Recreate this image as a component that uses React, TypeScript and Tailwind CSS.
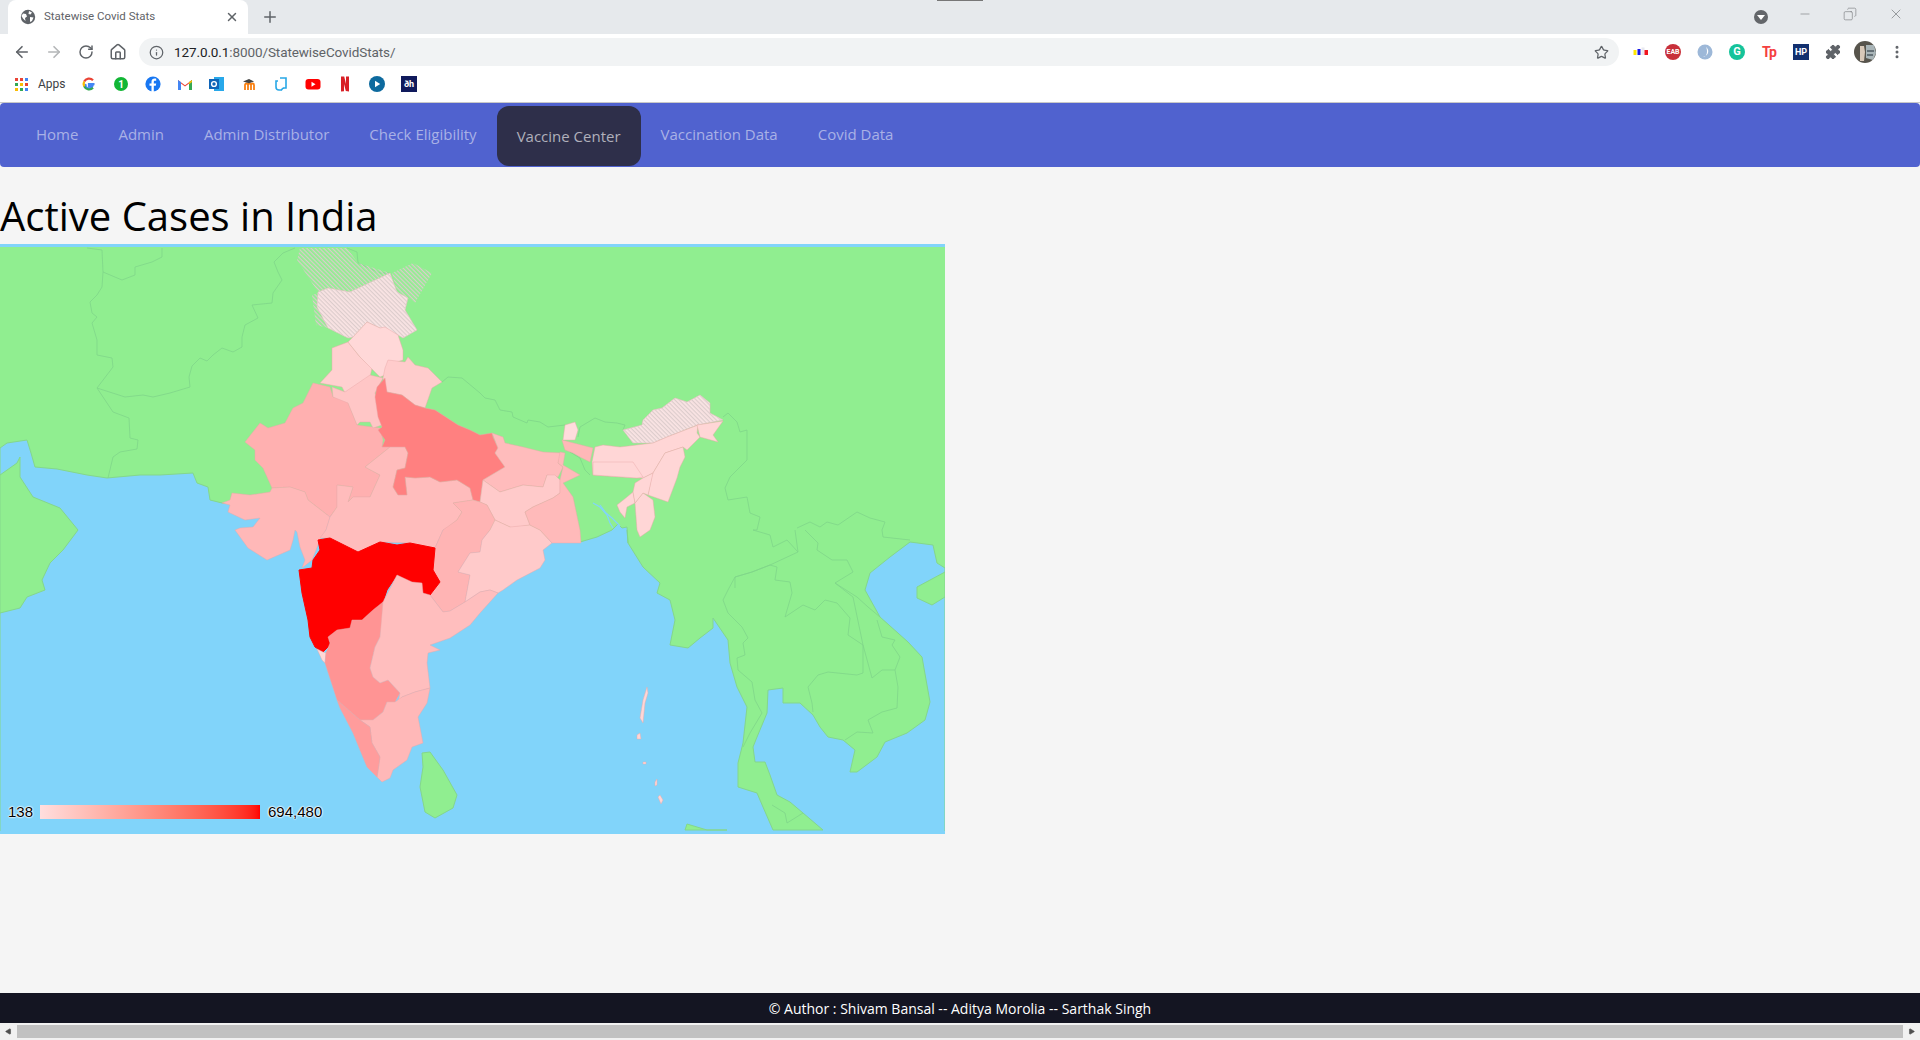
import { ArrowLeft, ArrowRight, RotateCw, Home, Info, Star, X, Plus, Minus, Copy, Puzzle, EllipsisVertical, Play } from 'lucide-react';

const navLinks = ['Home', 'Admin', 'Admin Distributor', 'Check Eligibility', 'Vaccine Center', 'Vaccination Data', 'Covid Data'];

const SEA =
    '0,448 7,443 27,440 31,453 35,467 57,469 87,475 107,478 140,475 160,475 193,473 197,483 208,487 210,500 222,503 580,542 597,537 612,530 618,524 622,528 627,527 628,543 643,567 660,583 657,593 670,600 675,620 670,645 688,648 700,638 713,628 713,618 728,640 730,663 737,687 747,707 743,743 738,763 738,787 757,793 763,807 773,830 823,830 803,813 790,802 777,795 770,775 765,762 755,762 753,747 757,737 767,713 768,690 783,688 783,703 800,703 813,715 820,727 828,737 843,740 855,750 850,772 857,772 877,757 885,742 907,733 925,720 930,702 922,657 908,642 880,617 865,590 870,573 890,557 910,542 933,545 937,563 945,568 945,834 0,834';

const LAND = [
    '0,475 17,463 20,457 20,477 33,497 60,508 78,530 63,550 50,563 42,580 45,590 27,597 20,608 0,613',
    '917,587 945,572 945,597 932,605 917,598',
    '422,753 430,752 443,770 457,795 453,808 435,818 425,812 420,787 423,767',
    '685,830 687,824 697,827 707,830 727,830',
];

const BORDERS = [
    '87,248 102,250 103,272 102,287 97,295 90,302 92,313 97,317 92,323 97,340 97,355 112,358 113,367 97,388 107,403 113,412 129,418 130,438 138,440 137,449 120,452 113,457 108,478',
    '103,272 122,280 135,275 135,267 152,262 162,257 162,248',
    '97,388 125,397 143,395 153,397 170,393 190,387 189,377 192,366 200,358 207,361 213,355 222,348 233,352 242,347 242,337 245,325 258,318 252,305 272,303 273,293 282,280 278,272 274,262 283,253 295,248',
    '347,248 357,252 358,263 380,273 390,273',
    '442,382 448,377 462,378 480,393 485,398 495,400 500,410 512,412 513,417 527,423 528,420 540,422 548,427 565,425',
    '578,437 580,427 595,418 605,422 617,423 625,425 623,430',
    '723,417 728,413 737,422 740,432 747,430 747,460 730,477 725,488 728,500 747,497 750,513 760,517 757,530 753,530 770,535 773,547 787,540 798,552 770,565 752,572 735,577 735,588',
    '797,528 810,522 820,527 827,522 838,525 857,512 870,518 885,522 882,530',
    '795,530 798,552',
    '805,530 818,543 817,550 832,560 847,560 853,572 835,583 857,597 868,607 880,617',
    '882,530 883,537 910,540',
    '770,565 777,567 775,580 790,582 792,593 785,617 803,605 815,610 825,600 837,603 850,618 848,635 863,645 863,673 857,675 828,672 818,675 808,687 812,703 813,712',
    '770,565 752,572 735,577 728,590 723,600 728,613 742,627 748,638 743,643 745,655 737,658 738,670 752,682 755,700 762,713 750,733 743,747',
    '835,583 853,597 863,645 872,678 882,670 895,670 900,657 892,645 895,640 882,637 877,620',
    '895,670 898,687 897,708 882,712 868,720 873,733 857,732 845,740',
    '772,805 785,813 787,823 803,813',
    '627,530 628,543',
    '570,452 580,458 585,470 590,475',
];

const RIVERS = ['593,503 600,507 607,515 610,523 613,528', '600,505 606,513 612,518 620,526'];

const STATES = [
    { fill: '#ffb0b0', p: '245,442 260,423 268,428 285,423 293,408 303,403 313,383 330,387 333,397 347,400 357,425 380,428 383,440 382,447 390,447 365,467 380,475 370,497 353,497 348,502 353,487 337,485 337,507 330,517 308,500 305,492 290,487 272,488 263,468 255,460 255,450' },
    { fill: '#ffd0d0', p: '320,383 332,370 332,348 348,342 360,357 372,368 370,377 360,387 345,393 342,387' },
    { fill: '#ffc6c6', p: '332,387 345,392 370,375 383,378 375,393 382,425 373,428 370,422 360,422 357,425 348,403 333,397' },
    { fill: '#ffd8d8', p: '353,337 367,322 380,328 385,327 398,335 403,350 403,360 387,365 385,375 380,377 370,367 360,357 348,342' },
    { fill: '#ffcccc', p: '385,368 388,360 405,362 408,357 415,365 428,368 442,382 432,388 425,408 415,405 402,395 387,392 383,378' },
    { fill: '#ffb8b8', p: '222,503 230,500 232,493 250,495 270,492 272,488 290,487 305,492 308,500 330,517 326,530 320,540 312,560 302,568 305,560 300,547 297,532 295,530 293,540 290,550 267,560 248,548 235,530 240,528 253,527 260,518 245,520 228,512 230,505' },
    { fill: '#ffbcbc', p: '365,467 390,447 405,447 408,453 405,468 397,470 393,487 398,495 407,495 405,477 415,478 430,477 440,482 457,480 470,488 473,500 453,503 462,512 457,520 447,528 443,530 435,548 410,543 380,542 358,552 330,538 320,538 326,530 330,517 337,507 337,485 353,487 348,502 353,497 370,497 380,475' },
    { fill: '#ff8080', p: '385,378 377,387 375,397 378,417 382,427 378,430 385,440 382,447 390,447 405,447 408,453 405,468 397,470 393,487 398,495 407,495 405,477 415,478 430,477 440,482 457,480 470,488 473,500 480,502 483,480 505,467 495,453 498,448 493,437 492,433 480,435 470,430 458,425 435,410 425,408 415,405 402,395 387,392' },
    { fill: '#ffbcbc', p: '492,433 503,437 505,443 523,447 543,452 562,453 558,463 563,467 558,477 547,475 543,487 523,485 500,492 483,480 505,467 495,453 498,448' },
    { fill: '#ffcaca', p: '483,480 500,492 523,485 543,487 547,475 555,475 560,480 560,493 553,498 533,507 525,512 530,525 512,528 495,520 487,505 480,502' },
    { fill: '#ffb4b4', p: '453,503 473,500 480,502 487,505 495,520 490,530 482,540 480,552 470,553 458,572 470,575 465,602 450,611 443,612 430,595 440,582 433,570 435,548 443,530 457,520 462,512' },
    { fill: '#ffcaca', p: '495,520 510,527 530,525 540,530 552,543 543,550 545,560 540,568 517,580 503,590 498,593 490,590 480,592 468,600 465,602 470,575 458,572 470,553 480,552 482,540 490,530' },
    { fill: '#ffbaba', p: '560,452 565,453 563,465 580,475 563,483 573,497 580,530 581,543 563,543 552,543 540,530 530,525 525,512 533,507 553,498 560,493 560,480 563,467 558,463' },
    { fill: '#ffb8b8', p: '562,440 593,448 590,462 580,457 573,453 565,450' },
    { fill: '#ffdcdc', p: '563,440 565,425 575,422 578,430 575,440' },
    { fill: '#ffd6d6', p: '595,447 603,445 620,447 653,443 667,437 698,425 697,433 700,437 687,450 683,447 665,453 653,473 643,478 637,478 593,475 592,462' },
    { fill: '#ffd6d6', p: '697,425 723,421 713,435 718,442 700,437' },
    { fill: '#ffd6d6', p: '593,462 633,462 643,477 637,478 593,475' },
    { fill: '#ffd6d6', p: '653,473 665,453 683,447 685,457 680,467 677,478 668,502 648,495 652,475' },
    { fill: '#ffd6d6', p: '617,505 627,497 633,492 635,503 627,507 625,518 620,512' },
    { fill: '#ffd6d6', p: '635,503 643,493 653,500 655,517 650,530 650,530 640,537 637,530' },
    { fill: '#ffd6d6', p: '635,483 643,478 653,473 648,495 643,493 635,503 633,492' },
    { fill: '#ff0000', p: '318,540 330,538 358,552 380,542 397,545 410,543 435,548 433,570 440,582 430,595 423,593 422,583 412,582 397,575 387,590 383,602 373,610 362,620 352,620 350,628 337,630 328,637 330,645 323,652 315,647 310,637 308,620 302,593 299,570 312,568 313,560 320,550' },
    { fill: '#ffd8d8', p: '317,649 323,652 326,653 325,663 322,660' },
    { fill: '#ff9494', p: '326,653 330,643 328,637 337,630 350,628 352,620 362,620 373,610 383,602 383,617 380,637 375,647 370,668 373,677 380,683 388,680 400,693 395,702 387,702 383,712 373,720 360,720 337,700 325,663' },
    { fill: '#ffbebe', p: '383,602 397,575 412,582 422,583 423,593 430,595 443,612 450,611 465,602 468,600 480,592 490,590 498,593 480,613 470,625 450,638 430,645 440,650 428,653 427,663 430,688 415,692 402,697 398,703 400,693 388,680 380,683 373,677 370,668 375,647 380,637' },
    { fill: '#ffb8b8', p: '360,720 373,720 383,712 387,702 395,702 402,697 415,692 430,688 427,703 418,717 423,743 412,747 407,760 393,770 390,778 382,782 377,777 380,757 372,743 370,727' },
    { fill: '#ff9c9c', p: '337,700 360,720 370,727 372,743 380,757 377,777 367,767 353,733 340,708' },
    { fill: '#ffd6d6', p: '647,687 648,693 645,703 643,723 640,718 643,700' },
    { fill: '#ffd6d6', p: '637,735 640,733 641,739 637,739' },
    { fill: '#ffd6d6', p: '643,762 646,762 646,764 643,764' },
    { fill: '#ffd6d6', p: '655,782 657,779 657,785 655,786' },
    { fill: '#ffd6d6', p: '660,795 663,800 661,804 658,797' },
];

// disputed areas: hatch over the map, solid pink underneath only where it is inside India
const HATCHED_OPEN = [
    '297,260 300,248 347,248 358,263 390,273 350,292 328,288 318,292',
    '392,273 413,263 432,273 415,303 408,298 397,292',
    '312,295 318,293 328,328 316,325',
];
const HATCHED_SOLID = [
    '318,292 328,288 350,292 390,273 397,292 408,298 405,310 417,330 403,338 398,335 380,328 367,322 353,337 348,338 328,328 317,307',
    '623,430 642,425 643,420 653,410 662,408 675,398 687,402 700,395 710,403 710,413 723,420 697,425 667,437 653,443 633,443',
];

function IndiaMap() {
    return (
        <svg viewBox="0 244 945 590" className="block w-full h-full">
            <defs>
                <pattern id="hatch" width="3" height="3" patternUnits="userSpaceOnUse" patternTransform="rotate(45)">
                    <rect width="3" height="1.2" fill="#dccccc" />
                </pattern>
            </defs>
            <rect x="0" y="244" width="945" height="590" fill="#90ee90" />
            <polygon points={SEA} fill="#81d4fa" stroke="#84d78c" strokeWidth="1" />
            <rect x="0" y="244" width="945" height="3" fill="#81d4fa" />
            <rect x="0" y="831" width="945" height="3" fill="#81d4fa" />
            {LAND.map((p) => (
                <polygon key={p} points={p} fill="#90ee90" stroke="#84d78c" strokeWidth="1" />
            ))}
            {BORDERS.map((p) => (
                <polyline key={p} points={p} fill="none" stroke="#80d68a" strokeOpacity="0.8" strokeWidth="1" />
            ))}
            {RIVERS.map((p) => (
                <polyline key={p} points={p} fill="none" stroke="#81d4fa" strokeWidth="1.2" />
            ))}
            {HATCHED_OPEN.map((p) => (
                <polygon key={p} points={p} fill="url(#hatch)" />
            ))}
            {HATCHED_SOLID.map((p) => (
                <g key={p}>
                    <polygon points={p} fill="#fae4e4" stroke="#e3bcbc" strokeOpacity="0.6" strokeWidth="1" />
                    <polygon points={p} fill="url(#hatch)" />
                </g>
            ))}
            {STATES.map((s) => (
                <polygon key={s.p} points={s.p} fill={s.fill} stroke={s.fill === '#ff0000' ? '#ff0000' : '#e8a8a8'} strokeOpacity={s.fill === '#ff0000' ? 1 : 0.45} strokeWidth="1" />
            ))}
        </svg>
    );
}

function Favicon({ children }: { children: React.ReactNode }) {
    return <svg viewBox="0 0 16 16" className="w-4 h-4 shrink-0">{children}</svg>;
}

function Bookmarks() {
    return (
        <div className="h-[35px] pb-[1px] bg-white flex items-center pl-[15px] text-[12px] text-[#3c4043] font-['Roboto',sans-serif]">
            <div className="grid grid-cols-3 gap-[2px] w-[13px] h-[13px]">
                {['bg-[#ea4335]', 'bg-[#ea4335]', 'bg-[#4285f4]', 'bg-[#34a853]', 'bg-[#fbbc05]', 'bg-[#ea4335]', 'bg-[#fbbc05]', 'bg-[#34a853]', 'bg-[#4285f4]'].map((c, i) => (
                    <span key={i} className={`${c} w-[3px] h-[3px]`} />
                ))}
            </div>
            <span className="ml-[10px] w-[43px]">Apps</span>
            <div className="flex items-center gap-4">
                <Favicon>
                    <path d="M13.5 8.2H8v2.2h3.2A3.4 3.4 0 0 1 4.7 8" fill="none" stroke="#4285f4" strokeWidth="2.2" />
                    <path d="M12 4.3A5.4 5.4 0 0 0 3.2 5.6" fill="none" stroke="#ea4335" strokeWidth="2.2" />
                    <path d="M3.2 5.6a5.4 5.4 0 0 0 0 4.8" fill="none" stroke="#fbbc05" strokeWidth="2.2" />
                    <path d="M3.2 10.4a5.4 5.4 0 0 0 8.8 1.4" fill="none" stroke="#34a853" strokeWidth="2.2" />
                </Favicon>
                <Favicon>
                    <circle cx="8" cy="8" r="7" fill="#12b635" />
                    <text x="8" y="11.5" textAnchor="middle" fontSize="10" fontWeight="700" fill="#fff" fontFamily="Roboto">1</text>
                </Favicon>
                <Favicon>
                    <circle cx="8" cy="8" r="7.6" fill="#1877f2" />
                    <path d="M8.8 16V9.8h2l.4-2.4H8.8V6c0-.8.3-1.2 1.2-1.2h1.2V2.7c-2.6-.5-4.7.2-4.7 3v1.7h-2v2.4h2V16z" fill="#fff" />
                </Favicon>
                <Favicon>
                    <path d="M1 14V4l7 5.2L15 4v10h-3V7.5L8 10.6 4 7.5V14z" fill="#ea4335" />
                    <path d="M1 14V4l3 2.2V14z" fill="#4285f4" />
                    <path d="M15 14V4l-3 2.2V14z" fill="#34a853" />
                    <path d="M12 6.2 15 4v2l-3 2.2z" fill="#fbbc05" />
                </Favicon>
                <Favicon>
                    <rect x="5" y="1" width="10" height="14" fill="#28a8ea" />
                    <rect x="0" y="3" width="10" height="10" fill="#0f65b8" />
                    <circle cx="5" cy="8" r="2.4" fill="none" stroke="#fff" strokeWidth="1.4" />
                </Favicon>
                <Favicon>
                    <path d="M2 14V9c0-2 3-2 3 0v5M5 9c0-2 3-2 3 0v5M8 9c0-2 3-2 3 0v5" transform="translate(2 0)" fill="none" stroke="#f98012" strokeWidth="1.8" />
                    <path d="M2 5.5 8 3l5 2.5-5 1.8z" fill="#444" />
                </Favicon>
                <Favicon>
                    <path d="M7 2h6v10h-3M10 12l-2 2.5M5 5H3v6a3 3 0 0 0 3 3h2" fill="none" stroke="#29a8e6" strokeWidth="1.6" />
                </Favicon>
                <Favicon>
                    <rect x="0.5" y="3" width="15" height="10.5" rx="3" fill="#f00" />
                    <path d="M6.5 5.8v5l4-2.5z" fill="#fff" />
                </Favicon>
                <Favicon>
                    <path d="M4 0.5h3.2L9 8V0.5h3v15l-3.2-.5L7 8v7.2l-3 .4z" fill="#d81f26" />
                </Favicon>
                <Favicon>
                    <circle cx="8" cy="8" r="8" fill="#0d6a9e" />
                    <path d="M6 4.8v6.4L11.2 8z" fill="#fff" />
                </Favicon>
                <div className="w-4 h-4 bg-[#101a5c] text-white text-[9px] leading-4 text-center font-bold">ðh</div>
            </div>
        </div>
    );
}

function BrowserChrome() {
    return (
        <div className="shrink-0 font-['Roboto',sans-serif]">
            <div className="h-[34px] bg-[#e6e9ec] flex items-end relative pl-2">
                <div className="absolute left-[937px] top-0 w-[46px] h-px bg-[#777]" />
                <div className="w-[240px] h-[34px] bg-white rounded-t-lg flex items-center pl-[12px] pr-[9px]">
                    <svg viewBox="0 0 16 16" className="w-4 h-4 shrink-0">
                        <circle cx="8" cy="8" r="7.2" fill="#5f6368" />
                        <path d="M3 4.5 6 5l1 2.5L5 9l.5 3L3 9.5 1.5 7zM9 2l3 1.5-1.5 2L8.5 5zM10 8l3.5.5L12 12l-2 1z" fill="#fff" />
                    </svg>
                    <span className="ml-[8px] flex-1 text-[11.5px] text-[#5f6368] truncate">Statewise Covid Stats</span>
                    <X size={14} strokeWidth={2.5} className="text-[#5f6368]" />
                </div>
                <div className="ml-[13px] h-[34px] flex items-center">
                    <Plus size={18} strokeWidth={2} className="text-[#5f6368]" />
                </div>
                <div className="ml-auto h-[34px] flex items-center text-[#6e7275]">
                    <div className="w-[14px] h-[14px] rounded-full bg-[#63666a] flex items-center justify-center">
                        <div className="w-0 h-0 border-l-[4px] border-r-[4px] border-t-[5px] border-l-transparent border-r-transparent border-t-white" />
                    </div>
                    <div className="ml-[30px] -mt-[6px]"><Minus size={14} strokeWidth={1} /></div>
                    <div className="ml-[31px] -mt-[6px]"><Copy size={14} strokeWidth={1} className="scale-x-[-1]" /></div>
                    <div className="ml-[31px] mr-[16px] -mt-[6px]"><X size={16} strokeWidth={1} /></div>
                </div>
            </div>
            <div className="h-[33px] pt-[3px] bg-white flex items-center pl-[13px] text-[#5f6368]">
                <ArrowLeft size={18} strokeWidth={2.2} />
                <ArrowRight size={18} strokeWidth={2.2} className="ml-[14px] text-[#b4b6b8]" />
                <RotateCw size={16} strokeWidth={2.2} className="ml-[15px]" />
                <Home size={18} strokeWidth={2} className="ml-[15px]" />
                <div className="ml-[12px] w-[1480px] h-[28px] rounded-full bg-[#f1f3f4] flex items-center pl-[10px] pr-[10px]">
                    <Info size={15} strokeWidth={2} />
                    <span className="ml-[10px] flex-1 text-[13.5px] tracking-[-0.1px]"><span className="text-[#202124]">127.0.0.1</span>:8000/StatewiseCovidStats/</span>
                    <Star size={15} strokeWidth={2} />
                </div>
                <div className="ml-[14px] flex items-center gap-[16px]">
                    <Favicon>
                        <rect x="0.5" y="6" width="3" height="5" fill="#ffe600" />
                        <rect x="4.5" y="5" width="3" height="6" fill="#1a1ae6" />
                        <rect x="8.5" y="3.5" width="3" height="7.5" fill="#e8e8f0" />
                        <rect x="11.5" y="6" width="3.5" height="5" fill="#f0141e" />
                    </Favicon>
                    <div className="w-4 h-4 rounded-full bg-[#c8303a] text-white text-[7px] leading-4 text-center font-bold">EAB</div>
                    <Favicon>
                        <circle cx="8" cy="8" r="7.5" fill="#9db8d8" />
                        <path d="M6 13c4 0 5-6 3-10 3 2 4 8-3 10z" fill="#fff" />
                    </Favicon>
                    <div className="w-4 h-4 rounded-full bg-[#15c39a] text-white text-[11px] leading-4 text-center font-bold">G</div>
                    <div className="w-4 h-4 text-[#f54040] text-[14px] leading-4 text-center font-bold tracking-[-1px]">Tp</div>
                    <div className="w-4 h-4 bg-[#12306f] text-white text-[9px] leading-4 text-center font-bold">HP</div>
                    <Puzzle size={16} fill="#5f6368" strokeWidth={1.5} />
                    <svg viewBox="0 0 22 22" className="w-[22px] h-[22px] -mx-[3px] shrink-0">
                        <circle cx="11" cy="11" r="11" fill="#57544c" />
                        <path d="M12 4h8l2 8-3 7-7-2z" fill="#a9b5b8" />
                        <path d="M6 5h4l1 6-1 9H6z" fill="#d8c8b8" />
                        <path d="M13 10h7M13 14h6" stroke="#4d5a60" strokeWidth="1.5" />
                    </svg>
                    <EllipsisVertical size={16} strokeWidth={2.5} />
                </div>
            </div>
            <Bookmarks />
        </div>
    );
}

export default function App() {
    return (
        <div className="h-[1040px] w-[1920px] overflow-hidden flex flex-col bg-[#f5f5f5] font-['Open_Sans',sans-serif]">
            <BrowserChrome />
            <div className="h-px bg-[#c8c8c8] shrink-0" />
            <nav className="h-[64px] bg-[#5062cf] rounded-[4px] flex pl-4 pt-[3px] shrink-0 text-[15px]">
                {navLinks.map((link) =>
                    link === 'Vaccine Center' ? (
                        <a key={link} className="h-[60px] px-5 flex items-center rounded-[12px] bg-[#2e2f4a] text-[#b0b0bb]">{link}</a>
                    ) : (
                        <a key={link} className="h-[56px] px-5 flex items-center text-[#a9b1e6]">{link}</a>
                    )
                )}
            </nav>
            <main className="flex-1 min-h-0">
                <h1 className="h-[77px] pt-[22px] text-[40px] leading-[54px] text-black">Active Cases in India</h1>
                <div className="relative w-[945px] h-[590px]">
                    <IndiaMap />
                    <div className="absolute left-[8px] bottom-[15px] flex items-center text-[15px] leading-[15px] text-black font-['Liberation_Sans',sans-serif] [text-shadow:0_0_2px_#fff,0_0_2px_#fff,0_0_2px_#fff,0_0_1px_#fff]">
                        <span className="w-[32px]">138</span>
                        <div className="w-[220px] h-[14px] bg-linear-to-r from-[#ffdede] to-[#ff0000]" />
                        <span className="ml-[8px]">694,480</span>
                    </div>
                </div>
            </main>
            <footer className="h-[30px] bg-[#141522] text-white text-[14px] flex items-center justify-center shrink-0">
                © Author : Shivam Bansal -- Aditya Morolia -- Sarthak Singh
            </footer>
            <div className="h-[17px] shrink-0 flex items-center bg-[#f1f1f1] text-[#505050]">
                <div className="w-[17px] flex justify-center"><Play size={7} fill="#505050" className="scale-x-[-1]" /></div>
                <div className="flex-1 h-[13px] bg-[#c1c1c1]" />
                <div className="w-[17px] flex justify-center"><Play size={7} fill="#505050" /></div>
            </div>
        </div>
    );
}
